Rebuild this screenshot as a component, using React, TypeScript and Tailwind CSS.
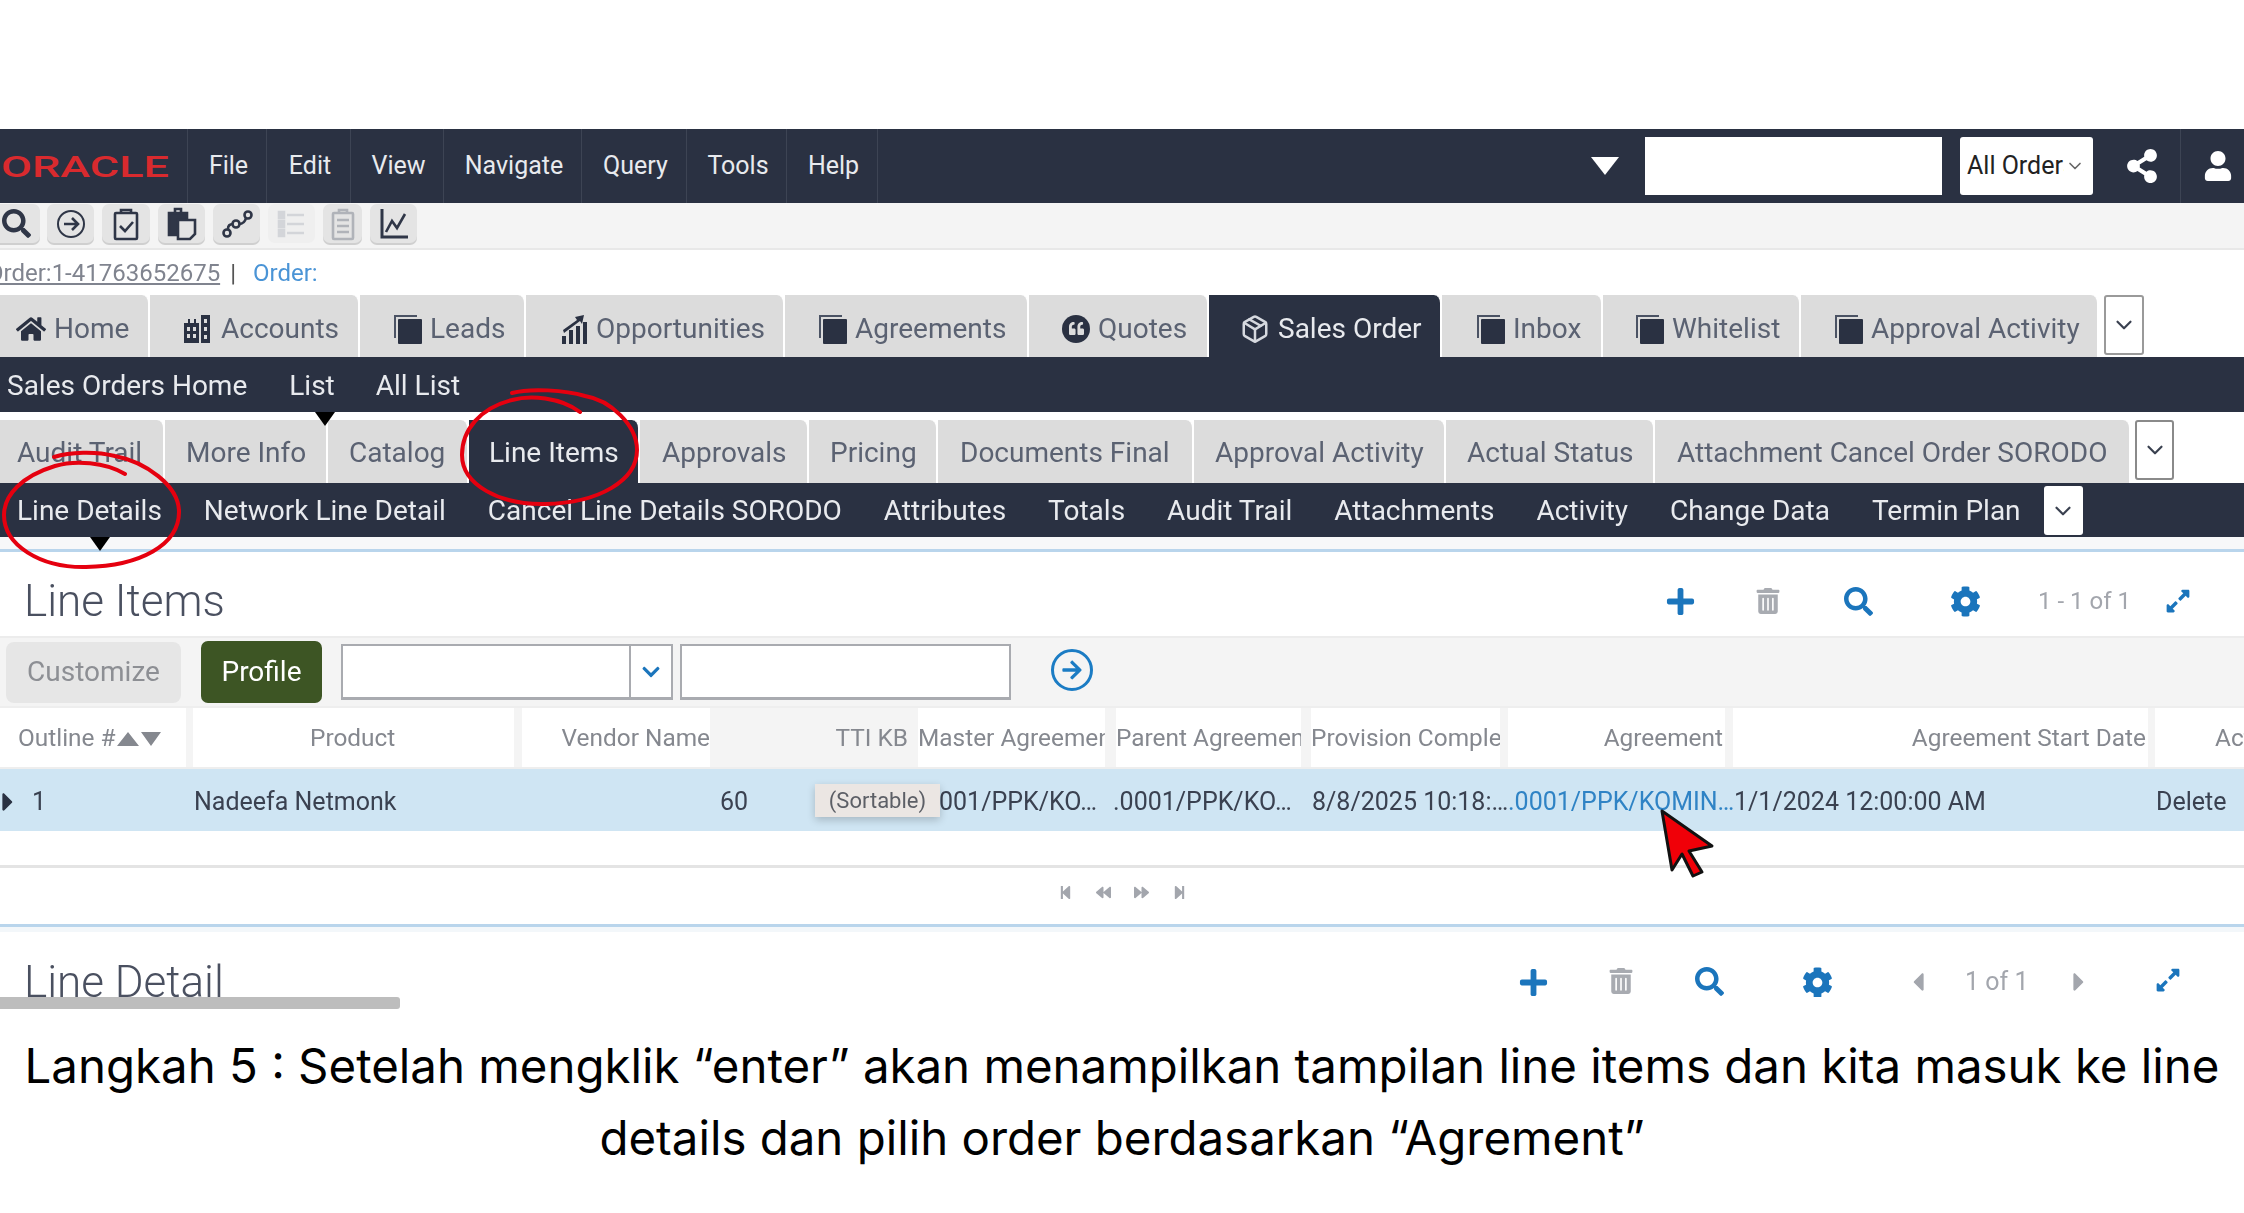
import type { ReactNode } from 'react';
import {
  FaHome,
  FaUser,
  FaShareAlt,
  FaPlus,
  FaSearch,
  FaCog,
  FaTrashAlt,
  FaExpandAlt,
  FaChevronDown,
  FaArrowRight,
  FaQuoteLeft,
  FaStepBackward,
  FaStepForward,
  FaBackward,
  FaForward,
  FaCaretLeft,
  FaCaretRight,
} from 'react-icons/fa';
import { LuPackage, LuChevronDown } from 'react-icons/lu';

function Pages() {
  return (
    <svg width="28" height="30" viewBox="0 0 28 30" fill="none">
      <path d="M1 24V2h22" stroke="#4b5364" strokeWidth="2" />
      <rect x="4" y="5" width="24" height="25" rx="1" fill="#2a3142" />
    </svg>
  );
}

function Bars() {
  return (
    <svg width="26" height="30" viewBox="0 0 26 30" fill="#2a3142">
      <rect x="0" y="22" width="4" height="8" />
      <rect x="7" y="16" width="4" height="14" />
      <rect x="14" y="12" width="4" height="18" />
      <rect x="21" y="8" width="4" height="22" />
      <path d="M1 16 15 6l-2-3 9-2-2 9-2-3L2 19z" />
    </svg>
  );
}

function Buildings() {
  return (
    <svg width="26" height="28" viewBox="0 0 26 28" className="mr-[3px]">
      <path d="M0 8h4V4h2v4h4V4h2v4h3v20H0z" fill="#2a3142" />
      <path d="M17 0h9v28h-9z" fill="#2a3142" />
      <path d="M3 12h3v4H3zM9 12h3v4H9zM3 19h3v4H3zM9 19h3v4H9zM20 4h3v4h-3zM20 12h3v4h-3zM20 20h3v4h-3z" fill="#dcdcdc" />
    </svg>
  );
}

function Tab({ w, icon, label, active, tight }: { w: string; icon?: ReactNode; label: string; active?: boolean; tight?: boolean }) {
  return (
    <div
      className={`${w} flex shrink-0 items-center gap-[8px] rounded-tr-lg border-r-2 border-white text-[28px] ${tight ? 'pt-[3px]' : 'pt-[5px]'} ${
        active ? 'bg-[#2a3142] text-[#e8eaee]' : 'bg-[#dcdcdc] text-[#5b6272]'
      }`}
    >
      {icon}
      <span className="whitespace-nowrap">{label}</span>
    </div>
  );
}

function MoreButton({ className }: { className: string }) {
  return (
    <div className={`flex items-center justify-center rounded-[3px] bg-white ${className}`}>
      <LuChevronDown className="text-[26px] text-[#3a4150]" />
    </div>
  );
}

function ToolButton({ w, children, faded }: { w: string; children: ReactNode; faded?: boolean }) {
  return (
    <div
      className={`${w} flex h-[39px] items-center justify-center rounded-[7px] ${
        faded ? 'bg-[#efefef]' : 'bg-[#e4e4e4] shadow-[0_2px_0_#cfcfcf]'
      }`}
    >
      {children}
    </div>
  );
}

function ToolIcon({ children, color = '#2f3647' }: { children: ReactNode; color?: string }) {
  return (
    <svg width="32" height="34" viewBox="0 0 32 34" fill="none" stroke={color} strokeWidth="2.6">
      {children}
    </svg>
  );
}

function HeaderCell({ w, align, children, className = '' }: { w: string; align?: string; children: ReactNode; className?: string }) {
  return (
    <div className={`${w} flex shrink-0 items-center overflow-hidden whitespace-nowrap pt-[2px] ${align ?? ''} ${className}`}>
      {children}
    </div>
  );
}

function Sep({ w }: { w: string }) {
  return <div className={`${w} h-full shrink-0 bg-[#f4f4f4]`} />;
}

export default function App() {
  return (
    <div className="relative h-[1213px] w-[2244px] overflow-hidden bg-white font-[family-name:Roboto,sans-serif]">
      <div className="h-[129px]" />

      <div className="blur-[0.6px]">
        {/* main nav */}
        <div className="flex h-[74px] items-stretch bg-[#2a3142] text-[25px] text-[#e8eaee]">
          <div className="flex w-[188px] items-center overflow-hidden border-r border-[#3d4454]">
            <span className="ml-[1px] origin-left scale-x-[1.5] text-[30px] font-medium text-[#d92a2e]">ORACLE</span>
          </div>
          {[
            ['File', 'w-[79px]'],
            ['Edit', 'w-[84px]'],
            ['View', 'w-[93px]'],
            ['Navigate', 'w-[138px]'],
            ['Query', 'w-[105px]'],
            ['Tools', 'w-[100px]'],
            ['Help', 'w-[91px]'],
          ].map(([label, w]) => (
            <div key={label} className={`${w} flex items-center justify-center border-r border-[#3d4454] pl-[3px]`}>
              {label}
            </div>
          ))}
          <div className="flex flex-1 items-center justify-end">
            <div className="mr-[26px] h-0 w-0 border-x-[14px] border-t-[18px] border-x-transparent border-t-white" />
            <div className="h-[58px] w-[297px] bg-white" />
            <div className="ml-[18px] flex h-[58px] w-[133px] items-center overflow-hidden rounded-[3px] bg-white pl-[7px] text-[25px] text-[#222]">
              <span className="w-[97px] overflow-hidden whitespace-nowrap">All Orders</span>
              <LuChevronDown className="ml-[1px] text-[20px] text-[#666]" />
            </div>
            <FaShareAlt className="ml-[32px] text-[34px] text-white" />
            <div className="ml-[21px] flex h-full w-[64px] items-center justify-center border-l border-[#3d4454]">
              <FaUser className="ml-[10px] text-[30px] text-white" />
            </div>
          </div>
        </div>

        {/* icon toolbar */}
        <div className="flex h-[47px] items-start gap-[8px] border-b-2 border-[#e8e8e8] bg-[#f4f4f4] pt-[1px]">
          <ToolButton w="w-[48px] -ml-[8px]">
            <FaSearch className="text-[29px] text-[#2f3647]" />
          </ToolButton>
          <ToolButton w="w-[47px] -ml-[1px]">
            <ToolIcon>
              <circle cx="16" cy="17" r="13" strokeWidth="2" />
              <path d="M9 17h13M17 11l6 6-6 6" />
            </ToolIcon>
          </ToolButton>
          <ToolButton w="w-[48px]">
            <ToolIcon>
              <rect x="5" y="6" width="22" height="26" rx="1" />
              <path d="M11 6V3h10v3" />
              <path d="M10 19l5 5 8-9" />
            </ToolIcon>
          </ToolButton>
          <ToolButton w="w-[47px]">
            <ToolIcon>
              <path d="M3 6h18v22H3z" fill="#2f3647" />
              <path d="M9 6V2h6v4" />
              <path d="M12 13h17v14l-5 5H12z" fill="#e4e4e4" />
            </ToolIcon>
          </ToolButton>
          <ToolButton w="w-[47px]">
            <ToolIcon>
              <circle cx="6" cy="26" r="3.5" />
              <circle cx="15" cy="17" r="3.5" />
              <circle cx="27" cy="8" r="3.5" />
              <path d="M7 22c0-4 2-5 5-5M18 17c4 0 6-2 7-6" />
            </ToolIcon>
          </ToolButton>
          <ToolButton w="w-[47px]" faded>
            <ToolIcon color="#d3d5d9">
              <path d="M11 8h17M11 17h17M11 26h17" />
              <path d="M3 5h5v6H3zM3 14h5v6H3zM3 23h5v6H3z" fill="#d3d5d9" />
            </ToolIcon>
          </ToolButton>
          <ToolButton w="w-[39px]">
            <ToolIcon color="#b0b3b9">
              <rect x="6" y="6" width="20" height="26" rx="1" />
              <path d="M12 6V3h8v3M10 13h12M10 19h12M10 25h12" />
            </ToolIcon>
          </ToolButton>
          <ToolButton w="w-[47px]">
            <ToolIcon>
              <path d="M4 2v28h26" strokeWidth="3" />
              <path d="M8 25l6-11 5 7 8-14" />
            </ToolIcon>
          </ToolButton>
        </div>

        {/* breadcrumb */}
        <div className="flex h-[45px] items-center overflow-hidden text-[24px]">
          <span className="-ml-[13px] text-[#80848f] underline">Order:1-41763652675</span>
          <span className="ml-[10px] text-[#555]">|</span>
          <span className="ml-[17px] text-[#4a94d6]">Order:</span>
        </div>

        {/* screen tabs */}
        <div className="flex h-[62px]">
          <Tab w="w-[150px] pl-[16px]" icon={<FaHome className="text-[30px] text-[#2a3142]" />} label="Home" />
          <Tab w="w-[210px] pl-[34px]" icon={<Buildings />} label="Accounts" />
          <Tab w="w-[166px] pl-[34px]" icon={<Pages />} label="Leads" />
          <Tab w="w-[259px] pl-[36px]" icon={<Bars />} label="Opportunities" />
          <Tab w="w-[244px] pl-[34px]" icon={<Pages />} label="Agreements" />
          <Tab w="w-[180px] pl-[33px]" icon={<span className="flex h-[28px] w-[28px] items-center justify-center rounded-full bg-[#2a3142] text-[15px] text-[#dcdcdc]"><FaQuoteLeft /></span>} label="Quotes" />
          <Tab w="w-[233px] pl-[31px]" active icon={<LuPackage className="text-[30px] text-[#d6d9df]" />} label="Sales Order" />
          <Tab w="w-[161px] pl-[35px]" icon={<Pages />} label="Inbox" />
          <Tab w="w-[198px] pl-[33px]" icon={<Pages />} label="Whitelist" />
          <Tab w="w-[298px] pl-[34px]" icon={<Pages />} label="Approval Activity" />
          <MoreButton className="ml-[5px] h-[60px] w-[40px] border-2 border-[#9a9a9a]" />
        </div>

        {/* sub nav */}
        <div className="flex h-[55px] items-center bg-[#2a3142] pt-[2px] text-[28px] text-[#e8eaee]">
          <span className="ml-[7px]">Sales Orders Home</span>
          <span className="ml-[42px]">List</span>
          <span className="ml-[41px]">All List</span>
        </div>

        {/* detail tabs */}
        <div className="flex h-[71px] border-t-[8px] border-white">
          {[
            ['Audit Trail', 'w-[165px] pl-[17px]'],
            ['More Info', 'w-[163px] pl-[21px]'],
            ['Catalog', 'w-[141px] pl-[21px]'],
          ].map(([label, w]) => (
            <Tab key={label} w={w} label={label} tight />
          ))}
          <Tab w="w-[171px] pl-[20px]" active label="Line Items" tight />
          {[
            ['Approvals', 'w-[169px] pl-[22px]'],
            ['Pricing', 'w-[129px] pl-[21px]'],
            ['Documents Final', 'w-[256px] pl-[22px]'],
            ['Approval Activity', 'w-[252px] pl-[21px]'],
            ['Actual Status', 'w-[209px] pl-[21px]'],
            ['Attachment Cancel Order SORODO', 'w-[476px] pl-[22px]'],
          ].map(([label, w]) => (
            <Tab key={label} w={w} label={label} tight />
          ))}
          <MoreButton className="mb-[3px] ml-[4px] w-[39px] border-2 border-[#8a8a8a]" />
        </div>

        {/* detail sub nav */}
        <div className="flex h-[54px] items-center gap-[42px] bg-[#2a3142] pl-[17px] pt-[1px] text-[28px] text-[#e8eaee]">
          {['Line Details', 'Network Line Detail', 'Cancel Line Details SORODO', 'Attributes', 'Totals', 'Audit Trail', 'Attachments', 'Activity', 'Change Data', 'Termin Plan'].map((label) => (
            <span key={label} className="whitespace-nowrap">{label}</span>
          ))}
          <MoreButton className="-ml-[19px] h-[49px] w-[39px]" />
        </div>

        {/* line items applet */}
        <div className="h-[15px] border-b-[3px] border-[#b9d5ec] bg-[#f7f8f9]" />
        <div className="flex h-[86px] items-center border-b-2 border-[#ececec] pl-[24px] pt-[14px]">
          <span className="w-[205px] whitespace-nowrap text-[44px] font-light text-[#4a5060]">Line Items</span>
          <div className="ml-[1421px] flex w-[60px] justify-center text-[31px] text-[#1b75bc]"><FaPlus /></div>
          <div className="ml-[28px] flex w-[60px] justify-center text-[26px] text-[#a8abb1]"><FaTrashAlt /></div>
          <div className="ml-[30px] flex w-[60px] justify-center text-[29px] text-[#1b75bc]"><FaSearch /></div>
          <div className="ml-[47px] flex w-[60px] justify-center text-[31px] text-[#1b75bc]"><FaCog /></div>
          <span className="ml-[43px] w-[110px] whitespace-nowrap text-[24px] text-[#a3a6ad]">1 - 1 of 1</span>
          <FaExpandAlt className="ml-[17px] text-[26px] text-[#1b75bc]" />
        </div>

        <div className="flex h-[68px] items-center bg-[#f4f4f4]">
          <div className="ml-[6px] flex h-[61px] w-[175px] items-center justify-center rounded-[8px] bg-[#e6e6e6] text-[28px] text-[#8d8f94]">Customize</div>
          <div className="ml-[20px] flex h-[62px] w-[121px] items-center justify-center rounded-[7px] bg-[#3d5524] text-[28px] text-white">Profile</div>
          <div className="ml-[19px] flex h-[56px] w-[332px] border-2 border-b-[3px] border-[#a9abb0] bg-white">
            <div className="flex-1" />
            <div className="flex w-[42px] items-center justify-center border-l-2 border-[#a9abb0] text-[20px] text-[#1b75bc]"><FaChevronDown /></div>
          </div>
          <div className="ml-[7px] h-[56px] w-[331px] border-2 border-b-[3px] border-[#a9abb0] bg-white" />
          <div className="-mt-[4px] ml-[40px] flex h-[42px] w-[42px] items-center justify-center rounded-full border-[3px] border-[#1b7cc4] text-[22px] text-[#1b7cc4]"><FaArrowRight /></div>
        </div>

        {/* table header */}
        <div className="flex h-[63px] border-y-2 border-y-[#eeeeee] text-[24.4px] text-[#85888f]">
          <HeaderCell w="w-[186px]" className="pl-[18px]">
            Outline #
            <svg width="46" height="16" viewBox="0 0 46 16" fill="#85888f" className="ml-[1px]">
              <path d="M0 15 11 1l11 14zM24 1h20L34 15z" />
            </svg>
          </HeaderCell>
          <Sep w="w-[7px]" />
          <HeaderCell w="w-[321px]" className="pl-[117px]">Product</HeaderCell>
          <Sep w="w-[8px]" />
          <HeaderCell w="w-[188px]" align="justify-end">Vendor Name</HeaderCell>
          <HeaderCell w="w-[208px]" align="justify-end" className="bg-[#f4f4f4] pr-[10px]">TTI KB</HeaderCell>
          <HeaderCell w="w-[187px]">Master Agreement</HeaderCell>
          <Sep w="w-[11px]" />
          <HeaderCell w="w-[185px]">Parent Agreement</HeaderCell>
          <Sep w="w-[10px]" />
          <HeaderCell w="w-[189px]">Provision Complete</HeaderCell>
          <Sep w="w-[8px]" />
          <HeaderCell w="w-[217px]" align="justify-end" className="pr-[2px]">Agreement</HeaderCell>
          <Sep w="w-[8px]" />
          <HeaderCell w="w-[415px]" align="justify-end" className="pr-[2px]">Agreement Start Date</HeaderCell>
          <Sep w="w-[7px]" />
          <HeaderCell w="w-[89px]" className="pl-[60px]">Action</HeaderCell>
        </div>

        {/* table row */}
        <div className="relative flex h-[62px] items-center bg-[#cfe5f3] pt-[4px] text-[25px] text-[#3a4150]">
          <div className="flex w-[194px] items-center">
            <FaCaretRight className="-ml-[7px] text-[30px] text-[#2a3142]" />
            <span className="ml-[9px]">1</span>
          </div>
          <span className="w-[526px]">Nadeefa Netmonk</span>
          <span className="w-[219px]">60</span>
          <span className="w-[174px] whitespace-nowrap">001/PPK/KO…</span>
          <span className="w-[199px] whitespace-nowrap">.0001/PPK/KO…</span>
          <span className="w-[196px] whitespace-nowrap">8/8/2025 10:18:…</span>
          <span className="w-[226px] whitespace-nowrap text-[#2f83c5]">.0001/PPK/KOMIN…</span>
          <span className="w-[422px] whitespace-nowrap">1/1/2024 12:00:00 AM</span>
          <span>Delete</span>
          <div className="absolute left-[815px] top-[15px] flex h-[33px] w-[125px] items-center justify-center bg-[#ebe6e3] text-[22px] text-[#5c5f66] shadow-[0_3px_8px_rgba(0,0,0,0.2)]">(Sortable)</div>
        </div>

        <div className="h-[37px] border-b-[3px] border-[#e4e4e4]" />

        {/* pager */}
        <div className="flex h-[56px] items-center justify-center gap-[20px] pb-[8px] text-[15px] text-[#a3a6ad]">
          <FaStepBackward />
          <FaBackward className="ml-[3px]" />
          <FaForward className="ml-[3px]" />
          <FaStepForward className="ml-[3px]" />
        </div>
        <div className="h-[8px] border-t-[3px] border-[#b9d5ec] bg-[#f3f7fa]" />

        {/* line detail applet */}
        <div className="flex h-[65px] items-start overflow-hidden pl-[24px] pt-[19px]">
          <span className="w-[206px] whitespace-nowrap text-[44px] font-light leading-[62px] text-[#4a5060]">Line Detail</span>
          <div className="ml-[1273px] flex w-[60px] justify-center pt-[16px] text-[31px] text-[#1b75bc]"><FaPlus /></div>
          <div className="ml-[28px] flex w-[60px] justify-center pt-[17px] text-[26px] text-[#a8abb1]"><FaTrashAlt /></div>
          <div className="ml-[28px] flex w-[60px] justify-center pt-[16px] text-[29px] text-[#1b75bc]"><FaSearch /></div>
          <div className="ml-[48px] flex w-[60px] justify-center pt-[16px] text-[31px] text-[#1b75bc]"><FaCog /></div>
          <FaCaretLeft className="ml-[56px] mt-[16px] text-[30px] text-[#a3a6ad]" />
          <span className="ml-[32px] mt-[12px] w-[97px] whitespace-nowrap text-[25px] text-[#a3a6ad]">1 of 1</span>
          <FaCaretRight className="ml-[2px] mt-[16px] text-[30px] text-[#a3a6ad]" />
          <FaExpandAlt className="ml-[61px] mt-[16px] text-[26px] text-[#1b75bc]" />
        </div>
        <div className="h-[12px] w-[400px] rounded-r-[3px] bg-[#bdbdbd]" />
      </div>

      {/* caption */}
      <div className="mt-[21px] text-center font-[family-name:Inter,sans-serif] text-[47.4px] font-normal leading-[72px] text-black">
        <div className="whitespace-nowrap">Langkah 5 : Setelah mengklik “enter” akan menampilkan tampilan line items dan kita masuk ke line</div>
        <div className="whitespace-nowrap">details dan pilih order berdasarkan “Agrement”</div>
      </div>

      {/* active tab markers */}
      <div className="absolute left-[315px] top-[412px] h-0 w-0 border-x-[10px] border-t-[14px] border-x-transparent border-t-black" />
      <div className="absolute left-[90px] top-[537px] h-0 w-0 border-x-[10px] border-t-[14px] border-x-transparent border-t-black" />

      {/* annotations */}
      <svg className="pointer-events-none absolute left-0 top-0" width="2244" height="1213" fill="none">
        <path
          d="M580 412C560 397 530 395 512 400 480 408 462 430 462 455 462 485 500 505 545 504 600 503 637 480 637 450 637 425 610 400 585 396 565 390 530 388 512 393"
          stroke="#e5000f"
          strokeWidth="4"
          strokeLinecap="round"
        />
        <path
          d="M125 474C105 462 75 460 55 466 22 476 4 495 4 515 4 545 40 568 86 567 140 566 179 545 179 512 179 485 145 462 115 456 95 451 70 452 54 457"
          stroke="#e5000f"
          strokeWidth="4"
          strokeLinecap="round"
        />
        <path
          d="M1662 811 1712 846 1689 851 1702 872 1693 876 1682 854 1672 870Z"
          fill="#f00008"
          stroke="#111"
          strokeWidth="3"
          strokeLinejoin="round"
        />
      </svg>
    </div>
  );
}
